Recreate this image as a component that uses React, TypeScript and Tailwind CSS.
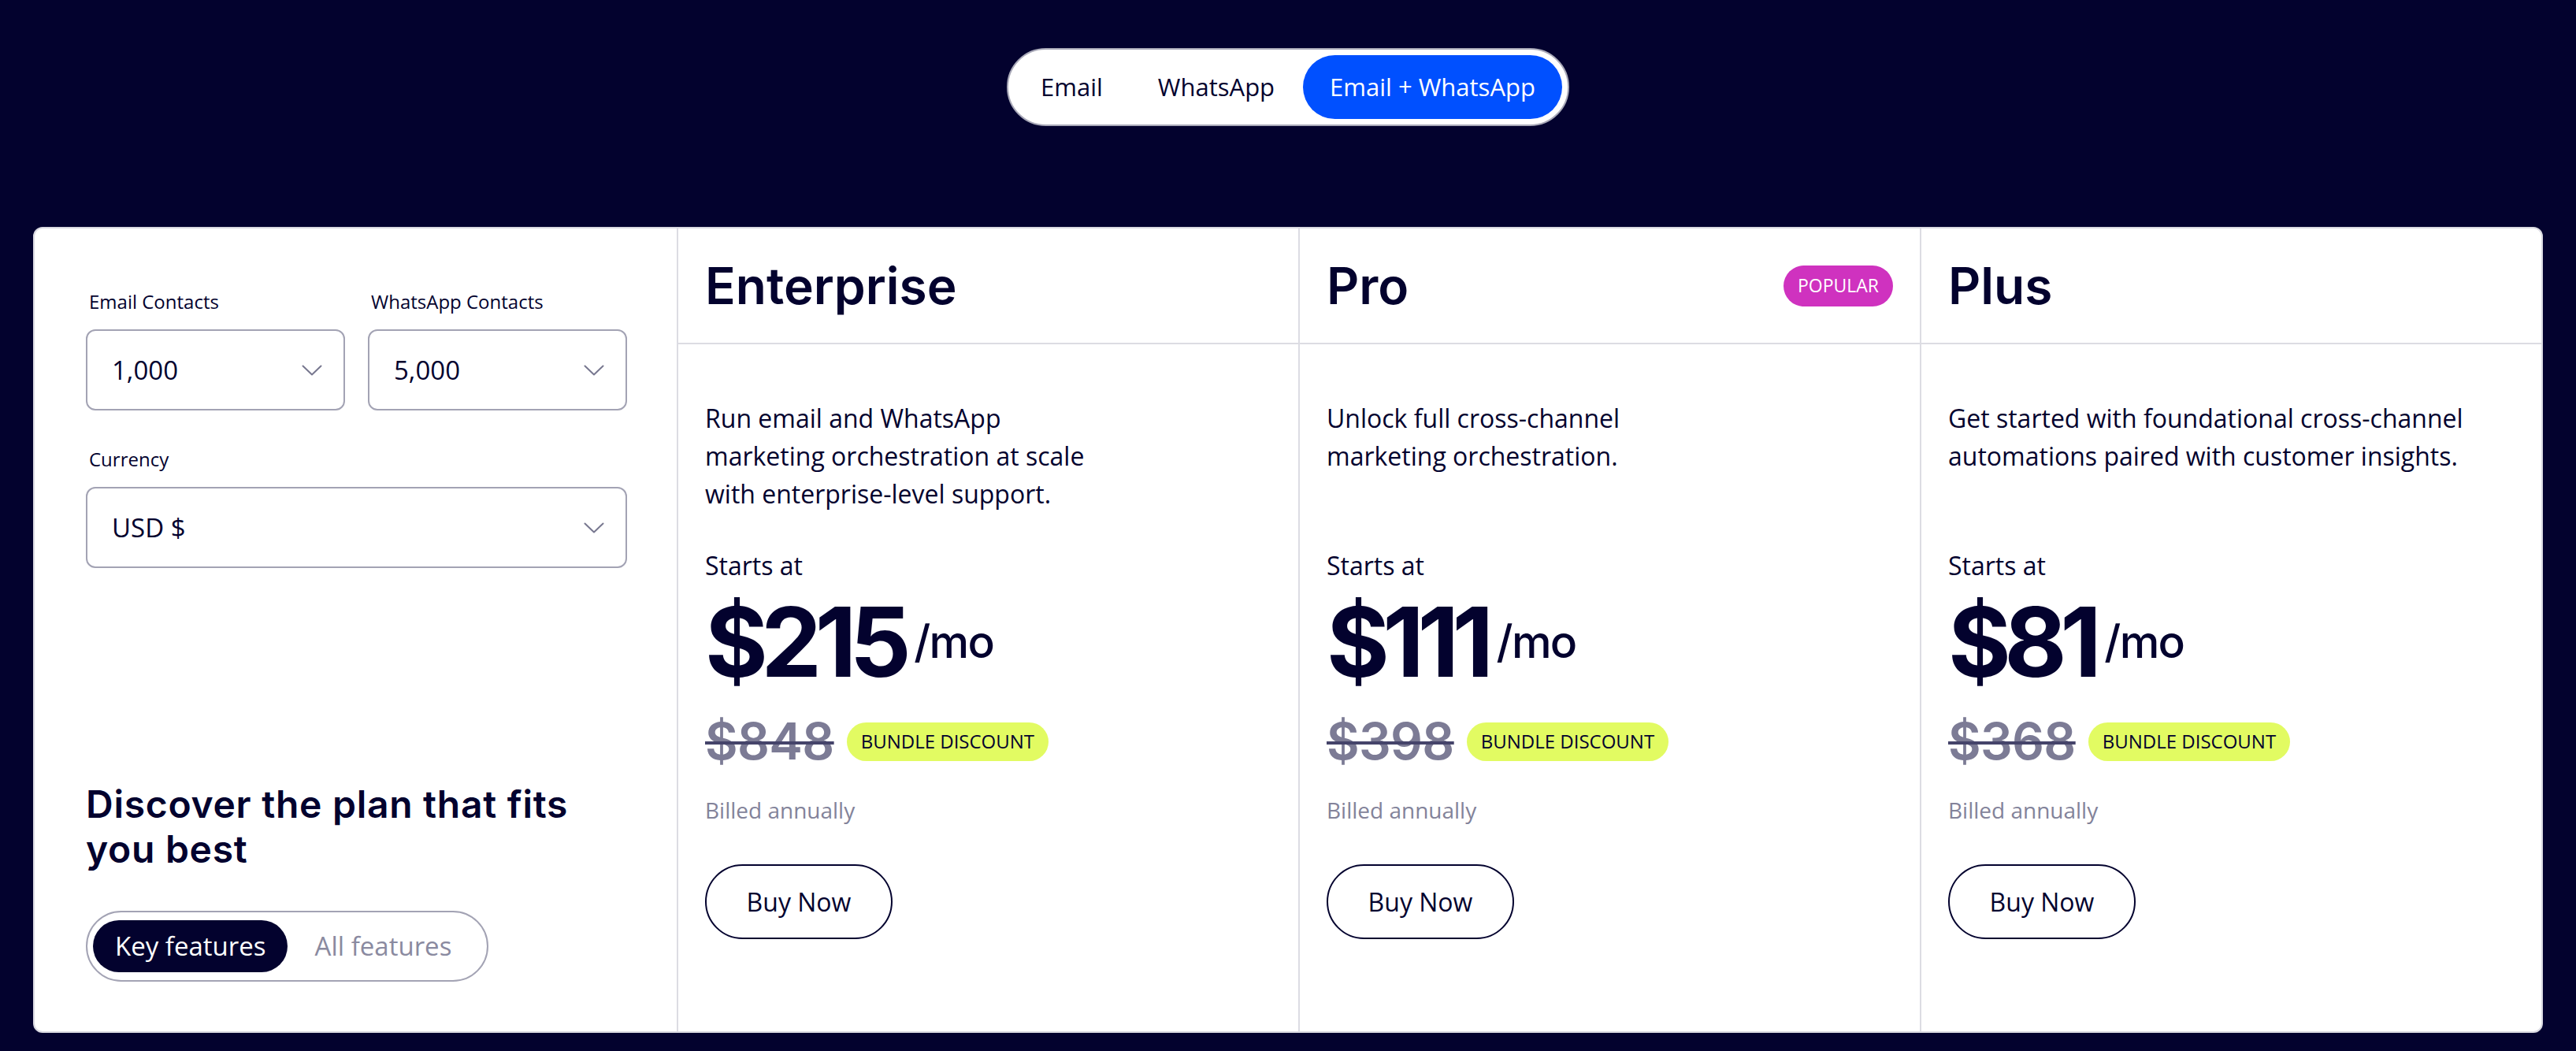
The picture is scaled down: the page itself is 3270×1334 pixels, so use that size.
import { useState } from "react";

const PLANS = [
  {
    name: "Enterprise",
    lines: ["Run email and WhatsApp", "marketing orchestration at scale", "with enterprise-level support."],
    price: "$215",
    old: "$848",
    popular: false,
  },
  {
    name: "Pro",
    lines: ["Unlock full cross-channel", "marketing orchestration."],
    price: "$111",
    old: "$398",
    popular: true,
  },
  {
    name: "Plus",
    lines: ["Get started with foundational cross-channel", "automations paired with customer insights."],
    price: "$81",
    old: "$368",
    popular: false,
  },
];

function Chevron() {
  return (
    <svg width="26" height="14" viewBox="0 0 26 14" fill="none">
      <polyline points="1.5,1.5 13,12.5 24.5,1.5" stroke="#77778f" strokeWidth="2" strokeLinecap="round" strokeLinejoin="round" />
    </svg>
  );
}

function SelectBox({ value }: { value: string }) {
  return (
    <div className="flex h-[103px] items-center justify-between rounded-[12px] border-2 border-[#a3a3b4] pl-[31px] pr-[27px]">
      <span className="text-[33px] text-[#03022e]">{value}</span>
      <Chevron />
    </div>
  );
}

export default function App() {
  const [channel, setChannel] = useState("both");
  const [mode, setMode] = useState("key");

  const channels = [
    { id: "email", label: "Email" },
    { id: "wa", label: "WhatsApp" },
    { id: "both", label: "Email + WhatsApp" },
  ];

  return (
    <div className="min-h-screen bg-[#03022e] px-[42px] pt-[61px] pb-[22px] font-['Open_Sans',sans-serif] text-[#03022e]">
      {/* Channel toggle */}
      <div className="flex justify-center">
        <div className="flex gap-[2px] rounded-full border-2 border-[#a9a9b8] bg-white p-[7px]">
          {channels.map((c) => (
            <button
              key={c.id}
              onClick={() => setChannel(c.id)}
              className={`h-[81px] rounded-full px-[34px] text-[31px] ${
                channel === c.id ? "bg-[#0050ff] text-white" : "text-[#03022e]"
              }`}
            >
              {c.label}
            </button>
          ))}
        </div>
      </div>

      {/* Pricing card */}
      <div className="mt-[128px] grid h-[1023px] grid-cols-[815px_1fr_1fr_1fr] overflow-hidden rounded-[12px] border-2 border-[#d9d9e1] bg-white">
        {/* Left panel */}
        <div className="flex flex-col justify-between pt-[76px] pb-[63px] pl-[65px] pr-[63px]">
          <div>
            <div className="grid grid-cols-2 gap-[29px]">
              <div>
                <div className="mb-[18px] pl-[4px] text-[24px] leading-[34px]">Email Contacts</div>
                <SelectBox value="1,000" />
              </div>
              <div>
                <div className="mb-[18px] pl-[4px] text-[24px] leading-[34px]">WhatsApp Contacts</div>
                <SelectBox value="5,000" />
              </div>
            </div>
            <div className="mt-[45px] mb-[18px] pl-[4px] text-[24px] leading-[34px]">Currency</div>
            <SelectBox value="USD $" />
          </div>

          <div>
            <h2 className="font-['Inter',sans-serif] text-[48px] font-semibold leading-[57px] tracking-[0.015em]">
              Discover the plan that fits
              <br />
              you best
            </h2>
            <div className="mt-[50px] inline-flex rounded-full border-2 border-[#a3a3b4] px-[7px] py-[10px]">
              <button
                onClick={() => setMode("key")}
                className={`h-[66px] rounded-full pl-[28px] pr-[27px] text-[33px] ${
                  mode === "key" ? "bg-[#03022e] text-white" : "text-[#8a8aa0]"
                }`}
              >
                Key features
              </button>
              <button
                onClick={() => setMode("all")}
                className={`h-[66px] rounded-full pl-[35px] pr-[38px] text-[33px] ${
                  mode === "all" ? "bg-[#03022e] text-white" : "text-[#8a8aa0]"
                }`}
              >
                All features
              </button>
            </div>
          </div>
        </div>

        {/* Plan columns */}
        {PLANS.map((p) => (
          <div key={p.name} className="flex flex-col border-l-2 border-[#dcdce3]">
            <div className="flex h-[147px] shrink-0 items-center justify-between border-b-2 border-[#dcdce3] pl-[34px] pr-[34px]">
              <h3 className="font-['Inter',sans-serif] text-[64px] font-semibold leading-none">
                {p.name}
              </h3>
              {p.popular && (
                <span className="flex h-[52px] items-center rounded-full bg-[#cf32bf] px-[18px] text-[23px] text-white">
                  POPULAR
                </span>
              )}
            </div>

            <div className="flex flex-col pl-[34px] pr-[34px] pt-[70px]">
              <p className="h-[144px] text-[32px] leading-[48px]">
                {p.lines.map((l, i) => (
                  <span key={i}>
                    {l}
                    {i < p.lines.length - 1 && <br />}
                  </span>
                ))}
              </p>

              <div className="mt-[43px] text-[32px] leading-[48px]">Starts at</div>

              <div className="mt-[12px] flex items-start">
                <span className="font-['Inter',sans-serif] text-[122px] font-bold leading-none tracking-[-0.07em]">
                  {p.price}
                </span>
                <span className="ml-[12px] mt-[32px] font-['Inter',sans-serif] text-[57px] font-medium leading-none tracking-[-0.03em]">
                  /mo
                </span>
              </div>

              <div className="mt-[33px] flex items-center gap-[16px]">
                <span className="font-['Inter',sans-serif] text-[64px] font-semibold leading-none tracking-[-0.01em] text-[#7c7b95] line-through decoration-[#45446a] decoration-4">
                  {p.old}
                </span>
                <span className="flex h-[49px] items-center rounded-full bg-[#e2fb62] px-[18px] text-[24px] text-[#03022e]">
                  BUNDLE DISCOUNT
                </span>
              </div>

              <div className="mt-[35px] text-[28px] leading-[40px] text-[#83839a]">Billed annually</div>

              <button className="mt-[49px] h-[95px] w-[238px] rounded-full border-2 border-[#03022e] text-[32px]">
                Buy Now
              </button>
            </div>
          </div>
        ))}
      </div>
    </div>
  );
}
